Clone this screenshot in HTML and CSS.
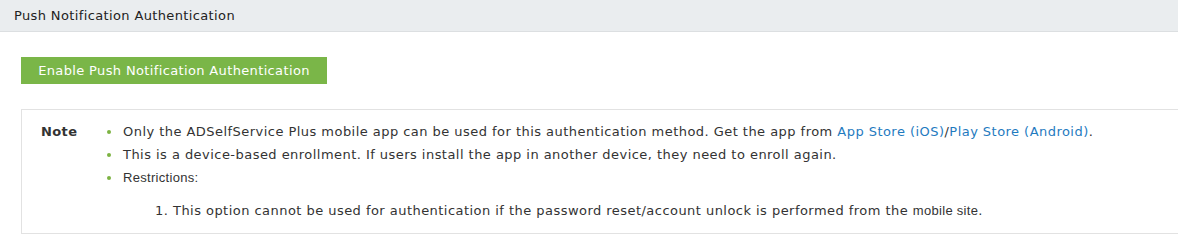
FILE: index.html
```html
<!DOCTYPE html>
<html>
<head>
<meta charset="utf-8">
<link rel="stylesheet" href="styles.css">
</head>
<body>
<div class="header">Push Notification Authentication</div>
<div class="content">
  <button class="btn">Enable Push Notification Authentication</button>
  <div class="note">
    <div class="note-label">Note</div>
    <ul class="note-list">
      <li>Only the ADSelfService Plus mobile app can be used for this authentication method. Get the app from <a href="#">App Store (iOS)</a>/<a href="#">Play Store (Android)</a>.</li>
      <li>This is a device-based enrollment. If users install the app in another device, they need to enroll again.</li>
      <li><span class="small">Restrictions:</span>
        <ol class="restrictions">
          <li>This option cannot be used for authentication if the password reset/account unlock is performed from the <span class="small">mobile site</span>.</li>
        </ol>
      </li>
    </ul>
  </div>
</div>
</body>
</html>
```
FILE: styles.css
```css
* { box-sizing: border-box; }
html, body { margin: 0; padding: 0; background: #fff; }
body {
  font-family: "DejaVu Sans", Verdana, sans-serif;
  font-size: 13px;
  color: #333;
}
.header {
  height: 32px;
  background: #eaedef;
  border-bottom: 1px solid #dcdfe1;
  padding: 0 0 0 14px;
  line-height: 31px;
  font-size: 13px;
  letter-spacing: 0.37px;
  color: #222;
}
.content {
  padding: 25px 0 0 21px;
}
.btn {
  display: block;
  height: 27px;
  width: 306px;
  border: 0;
  margin: 0;
  padding: 0;
  background: #7ab648;
  color: #fff;
  font-family: "DejaVu Sans", Verdana, sans-serif;
  font-size: 13px;
  letter-spacing: 0.36px;
  line-height: 27px;
}
.note {
  margin-top: 25px;
  border: 1px solid #e2e2e2;
  border-right: 0;
  display: flex;
  padding: 10px 0 10px 19px;
  height: 125px;
}
.note-label {
  width: 66px;
  font-weight: bold;
  font-size: 13px;
  letter-spacing: 0.4px;
  line-height: 23px;
  color: #333;
}
.note-list {
  margin: 0;
  padding: 0 0 0 16px;
  list-style: none;
  font-size: 13px;
  letter-spacing: 0.46px;
  line-height: 23px;
}
.note-list > li { position: relative; }
.note-list > li::before {
  content: "";
  position: absolute;
  left: -16px;
  top: 10px;
  width: 4px;
  height: 4px;
  border-radius: 50%;
  background: #7cb342;
}
.note-list a { color: #1f7bbf; text-decoration: none; }
.small {
  font-family: "Liberation Sans", Arial, sans-serif;
  font-size: 13px;
  letter-spacing: 0.3px;
}
.restrictions {
  margin: 10px 0 0 0;
  padding: 0 0 0 50px;
}
```
